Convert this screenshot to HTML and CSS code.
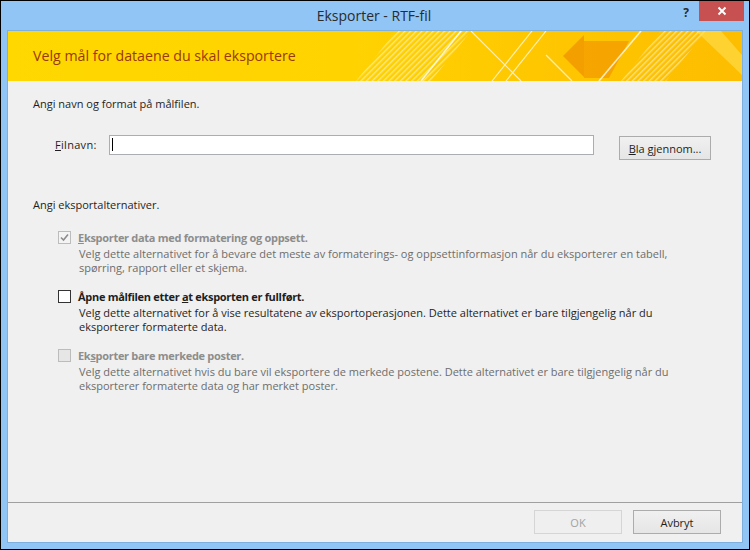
FILE: index.html
```html
<!DOCTYPE html>
<html lang="no">
<head>
    <meta charset="UTF-8">
    <title>Eksporter - RTF-fil</title>
    <link rel="stylesheet" href="styles.css">
</head>
<body>

    <div class="window">
        <div class="titlebar">
            <div></div>
            <div class="title">Eksporter - RTF-fil</div>
            <div class="controls">
                <span class="help">?</span>
                <span class="close">
                    <svg width="10" height="10" viewBox="0 0 10 10">
                        <path d="M1.5 1.5 L8.5 8.5 M8.5 1.5 L1.5 8.5" stroke="#fff" stroke-width="2"/>
                    </svg>
                </span>
            </div>
        </div>

        <div class="client">
            <div class="banner">
                <span class="banner-text">Velg mål for dataene du skal eksportere</span>
                <svg class="banner-art" width="400" height="50" viewBox="0 0 400 50">
                    <defs>
                        <pattern id="hatch" width="4" height="4" patternUnits="userSpaceOnUse" patternTransform="rotate(45)">
                            <rect width="1.4" height="4" fill="#fff" opacity="0.5"/>
                        </pattern>
                    </defs>
                    <!-- hatched bands -->
                    <polygon points="14,50 54,0 129,0 89,50" fill="url(#hatch)"/>
                    <polygon points="279,50 319,0 364,0 324,50" fill="url(#hatch)"/>
                    <!-- light lines -->
                    <path d="M79 50 L119 0" stroke="#fff" stroke-width="1.6" opacity="0.8"/>
                    <path d="M129 0 L179 50 M164 50 L204 0 M150 50 L190 0" stroke="#fff" stroke-width="1.2" opacity="0.7"/>
                    <path d="M204 24 L230 50" stroke="#fff" stroke-width="1.3" opacity="0.7"/>
                    <!-- arrow -->
                    <polygon points="221,25 242,4 242,46" fill="#f29a00" opacity="0.9"/>
                    <polygon points="242,10 287,10 267,47 242,47" fill="#f4a000" opacity="0.85"/>
                    <path d="M257 50 L299 0" stroke="#fff" stroke-width="1.6" opacity="0.75"/>
                    <!-- top right band -->
                    <polygon points="354,0 379,0 400,24 400,44" fill="#ffdf50" opacity="0.6"/>
                </svg>
            </div>

            <div class="main">
                <p class="section">Angi navn og format på målfilen.</p>

                <div class="file-row">
                    <label class="file-label"><u>F</u>ilnavn:</label>
                    <div class="file-input"><span class="caret"></span></div>
                    <button class="btn browse"><u>B</u>la gjennom...</button>
                </div>

                <p class="section options-title">Angi eksportalternativer.</p>

                <div class="option disabled">
                    <div class="option-head">
                        <span class="checkbox">
                            <svg width="11" height="11" viewBox="0 0 11 11">
                                <path d="M2 5.5 L4.5 8 L9 2.5" fill="none" stroke="#8c8c8c" stroke-width="1.6"/>
                            </svg>
                        </span>
                        <span class="option-label"><u>E</u>ksporter data med formatering og oppsett.</span>
                    </div>
                    <p class="option-desc">Velg dette alternativet for å bevare det meste av formaterings- og oppsettinformasjon når du eksporterer en tabell,<br>spørring, rapport eller et skjema.</p>
                </div>

                <div class="option">
                    <div class="option-head">
                        <span class="checkbox"></span>
                        <span class="option-label">Åpne målfilen etter <u>a</u>t eksporten er fullført.</span>
                    </div>
                    <p class="option-desc">Velg dette alternativet for å vise resultatene av eksportoperasjonen. Dette alternativet er bare tilgjengelig når du<br>eksporterer formaterte data.</p>
                </div>

                <div class="option disabled">
                    <div class="option-head">
                        <span class="checkbox empty"></span>
                        <span class="option-label">Ek<u>s</u>porter bare merkede poster.</span>
                    </div>
                    <p class="option-desc">Velg dette alternativet hvis du bare vil eksportere de merkede postene. Dette alternativet er bare tilgjengelig når du<br>eksporterer formaterte data og har merket poster.</p>
                </div>
            </div>

            <div class="footer">
                <button class="btn" disabled>OK</button>
                <button class="btn">Avbryt</button>
            </div>
        </div>
    </div>

</body>
</html>
```

FILE: styles.css
```css
body {
    margin: 0;
    background-color: #000;
    font-family: 'Open Sans', sans-serif;
    font-size: 11px;
    color: #1e1e1e;
}
.window {
    width: 750px;
    height: 550px;
    box-sizing: border-box;
    border: 1px solid #000;
    background-color: #91c5f5;
    display: flex;
    flex-direction: column;
}
.titlebar {
    height: 29px;
    flex-shrink: 0;
    display: grid;
    grid-template-columns: 1fr auto 1fr;
    padding-right: 5px;
}
.title {
    font-size: 14px;
    line-height: 29px;
    color: #2b2b2b;
    padding-left: 3px;
}
.controls {
    display: flex;
    justify-content: flex-end;
    align-items: flex-start;
}
.help {
    width: 26px;
    height: 20px;
    line-height: 24px;
    text-align: center;
    font-size: 12px;
    font-weight: bold;
    color: #2b2b2b;
}
.close {
    width: 45px;
    height: 20px;
    background-color: #c75050;
    display: flex;
    align-items: center;
    justify-content: center;
}
.client {
    flex: 1;
    margin: 0 6px 6px;
    border: 1px solid #7eb0df;
    background-color: #f0f0f0;
    display: flex;
    flex-direction: column;
}
.banner {
    height: 50px;
    flex-shrink: 0;
    display: flex;
    align-items: center;
    justify-content: space-between;
    background: linear-gradient(90deg, #ffd800 0%, #ffd300 45%, #fec600 75%, #fdbd00 100%);
}
.banner-text {
    padding-left: 25px;
    padding-bottom: 2px;
    font-size: 14.2px;
    color: #983a05;
}
.banner-art {
    display: block;
    flex-shrink: 0;
}
.main {
    flex: 1;
    padding: 15px 0 0 25px;
}
.section {
    margin: 0;
    line-height: 16px;
}
.file-row {
    display: flex;
    align-items: flex-start;
    margin: 23px 0 0 22px;
}
.file-label {
    width: 54px;
    line-height: 20px;
    letter-spacing: 0.3px;
}
.file-input {
    width: 485px;
    height: 20px;
    box-sizing: border-box;
    border: 1px solid #abadb3;
    background-color: #fff;
    padding: 2px 0 0 2px;
}
.caret {
    display: block;
    width: 1px;
    height: 13px;
    background-color: #000;
}
.btn {
    width: 88px;
    height: 24px;
    border: 1px solid #acacac;
    background: linear-gradient(#f0f0f0, #e5e5e5);
    font-family: 'Open Sans', sans-serif;
    font-size: 11px;
    color: #1e1e1e;
    padding: 0;
}
.btn:disabled {
    border-color: #d5d5d5;
    background: #efefef;
    color: #a3a3a3;
}
.browse {
    width: 92px;
    margin: 1px 0 0 25px;
}
.options-title {
    margin-top: 37px;
}
.option {
    margin: 16px 0 0 25px;
}
.option + .option {
    margin-top: 13px;
}
.option-head {
    display: flex;
    align-items: center;
    gap: 7px;
    height: 16px;
}
.checkbox {
    width: 13px;
    height: 13px;
    box-sizing: border-box;
    border: 1px solid #333;
    background-color: #fff;
    display: flex;
    align-items: center;
    justify-content: center;
}
.option-label {
    font-weight: bold;
    letter-spacing: -0.3px;
}
.option-desc {
    margin: 2px 0 0 21px;
    line-height: 14px;
    white-space: nowrap;
}
.disabled .checkbox {
    border-color: #bcbcbc;
    background-color: #f4f4f4;
}
.disabled .checkbox.empty {
    background-color: #e6e6e6;
}
.disabled .option-label {
    color: #8d8d8d;
}
.disabled .option-desc {
    color: #6d6d6d;
}
.footer {
    height: 40px;
    box-sizing: border-box;
    border-top: 1px solid #a0a0a0;
    display: flex;
    justify-content: flex-end;
    align-items: flex-start;
    gap: 11px;
    padding: 7px 21px 0 0;
}
```
